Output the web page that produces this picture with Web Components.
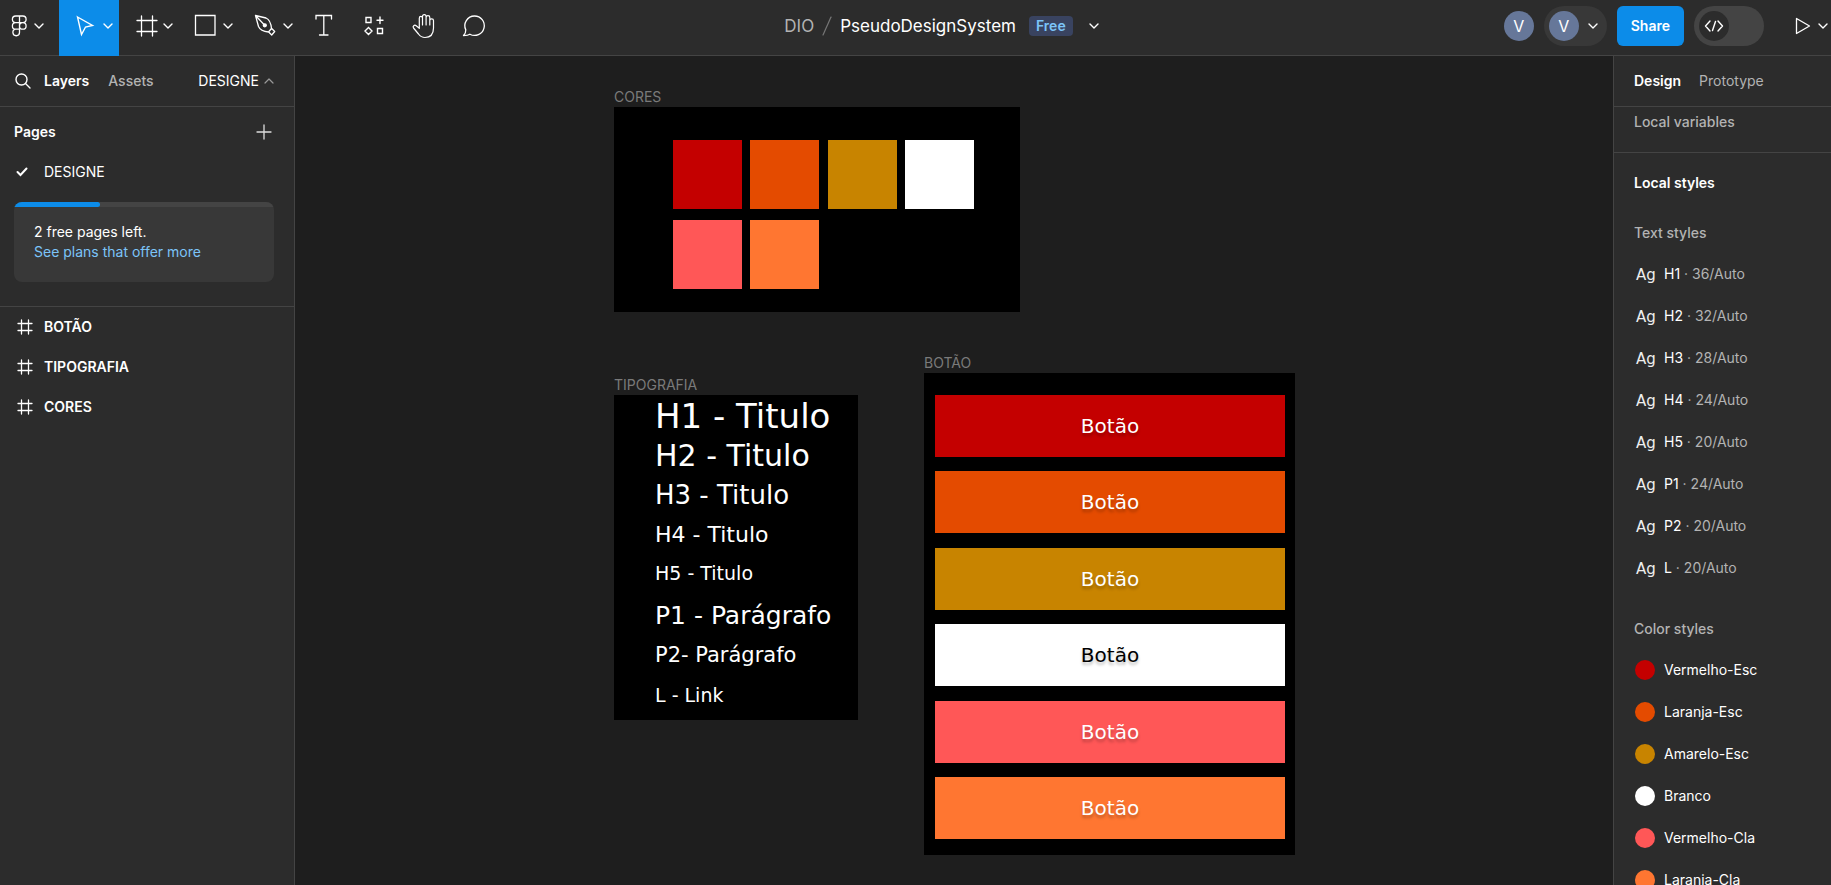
<!DOCTYPE html>
<html lang="pt-BR">
<head>
<meta charset="utf-8">
<meta name="viewport" content="width=device-width, initial-scale=1">
<title>PseudoDesignSystem</title>
<style>
  :root {
    --bg: #2c2c2c; --canvas: #1e1e1e; --line: #444; --text: #fff;
    --muted: #b3b3b3; --blue: #0c8ce9; --link: #7cc4f8; --raised: #383838;
    --brand-font: "DejaVu Sans", Verdana, sans-serif;
  }
  body { margin: 0; background: var(--canvas); color: var(--text); font: 14px/20px Inter, "Liberation Sans", sans-serif; }
</style>
</head>
<body>
<design-app></design-app>

<script>
const define = (name, html, init) => {
  const template = document.createElement('template');
  template.innerHTML = `<style>
    *, :host { box-sizing: border-box; }
    button { font: inherit; color: inherit; background: none; border: 0; padding: 0; margin: 0; text-align: left; }
    a { color: inherit; text-decoration: none; }
    h1, h2, h3, p { margin: 0; padding: 0; font: inherit; }
  </style>` + html;
  customElements.define(name, class extends HTMLElement {
    constructor() {
      super();
      this.attachShadow({ mode: 'open' }).append(template.content.cloneNode(true));
    }
    connectedCallback() { if (init) init(this, this.shadowRoot); }
  });
};

/* name: [width, height, markup] */
const ICONS = {
  chevron: [10, 6, '<path d="M1 1l4 4 4-4" stroke-width="1.4"/>'],
  chevronUp: [10, 6, '<path d="M1 5l4-4 4 4" stroke-width="1.2"/>'],
  logo: [30, 30, '<path d="M15.500 5H11.700a3.200 3.200 0 0 0 0 6.600h3.800zM15.500 5h3.300a3.200 3.200 0 0 1 0 6.600h-3.300zM15.500 11.600H11.700a3.200 3.200 0 0 0 0 6.600h3.800zM18.800 11.600a3.300 3.300 0 1 1-3.300 3.300 3.300 3.300 0 0 1 3.300-3.300zM15.500 18.200H11.700a3.300 3.300 0 1 0 3.800 3.300z" stroke-width="1.3"/>'],
  move: [30, 30, '<path d="M7.500 6l15 8.500-7 1.500-4 7.500z" stroke-width="1.4" stroke-linejoin="miter"/>'],
  frame: [30, 30, '<path d="M11.500 5v20M22.500 5v20M7 9.500h20M7 20.500h20" stroke-width="1.3"/>'],
  rect: [30, 30, '<path d="M5.500 4.500h19.500v19.500h-19.500z" stroke-width="1.3" stroke-linejoin="miter"/>'],
  pen: [30, 30, '<path d="M5.500 4.500l10.500 2.500c3.500 1.500 5 5.500 5.500 10.500l-3 3.500c-5-.5-8.500-2-10-5.500zM5.500 4.500l8.500 9M18.700 21l3 3 3-3.500-3-3"/><circle cx="14.800" cy="14.300" r="1.500" fill="currentColor"/>'],
  text: [30, 30, '<path d="M7 8V4.500h15.500V8M14.800 4.500v19.500M10.500 24h8.500" stroke-width="1.3" stroke-linejoin="miter"/>'],
  components: [30, 30, '<path d="M7 6.500h5v5H7zM18.500 17.500h5v5h-5zM21 6v6.500M18 9.200h6M9.500 16.500l3.500 3.500-3.500 3.500L6 20z" stroke-width="1.4" stroke-linejoin="miter"/>'],
  hand: [30, 30, '<path d="M10.300 14.500V7.200c0-2.400 3.200-2.400 3.200 0V5.500c0-2.600 3.600-2.600 3.600 0v1c0-2.500 3.700-2.500 3.700 0v3c0-2.300 3.700-2.300 3.700 0V17c0 6.500-3.500 9.500-8.500 9.500-3.500 0-5-1.500-6.500-3.500L4.500 17c-1.300-1.700 1-3.700 2.700-2.300l3.100 2.600zM13.500 7v7M17.100 6v8M20.800 8v6" stroke-width="1.2"/>'],
  comment: [30, 30, '<path d="M15.500 5a9.700 9.700 0 1 1-4.600 18.200c-1.500 1-3.400 1.300-6.400 1.300 1.800-1.800 2.400-3.500 2.300-5.600A9.700 9.700 0 0 1 15.500 5z"/>'],
  search: [16, 16, '<circle cx="6.500" cy="6.500" r="5.500" stroke-width="1.4"/><path d="M10.500 10.500l4.500 4.500" stroke-width="1.4"/>'],
  plus: [16, 16, '<path d="M8 1v14M1 8h14" stroke="#ddd"/>'],
  check: [12, 10, '<path d="M1.500 5l3 3 6-6.500" stroke-width="2" stroke-linejoin="miter"/>'],
  hash: [16, 16, '<path d="M4.500 1v14M11.500 1v14M1 4.500h14M1 11.500h14"/>'],
  code: [20, 14, '<path d="M6 2L1.500 7 6 12M14 2l4.500 5-4.500 5M11.500 2.500l-3 9" stroke-width="1.4"/>'],
  play: [16, 18, '<path d="M1.500 1.500L14.500 9l-13 7.500z" stroke-width="1.3"/>'],
  slash: [10, 20, '<path d="M9 1L1 19" stroke-width="1.2"/>'],
};

define('ui-icon', `<style>:host { display: block; flex: none; } svg { display: block; }</style>`, (host, root) => {
  const [w, h, body] = ICONS[host.getAttribute('name')];
  const t = document.createElement('template');
  t.innerHTML = `<svg width="${w}" height="${h}" viewBox="0 0 ${w} ${h}" fill="none" stroke="currentColor" stroke-width="1.3" stroke-linecap="round" stroke-linejoin="round" aria-hidden="true">${body}</svg>`;
  root.append(t.content);
});

define('tool-item', `
  <style>
    :host { display: flex; width: 60px; }
    :host([kind=single]) { width: 50px; }
    :host([kind=menu]) { width: 59px; }
    :host([active]) { background: var(--blue); margin-bottom: -1px; }
    button { flex: 1; display: flex; align-items: center; gap: 3px; padding: 0 0 4px 11px; }
    :host([active]) button { padding-bottom: 5px; }
    :host([kind=single]) button { padding-left: 10px; }
    :host([kind=menu]) button { padding-left: 4px; gap: 0; }
    :host([kind=single]) .more { display: none; }
  </style>
  <button type="button"><slot></slot><ui-icon class="more" name="chevron"></ui-icon></button>`,
  (host, root) => root.querySelector('button').setAttribute('aria-label', host.getAttribute('label')));

define('user-avatar', `
  <style>:host { display: grid; place-items: center; width: 30px; height: 30px; border-radius: 50%; background: #667799; font-size: 16px; }</style>
  <slot></slot>`);

define('app-toolbar', `
  <style>
    :host { display: grid; grid-template-columns: 1fr auto 1fr; height: 56px; background: var(--bg); border-bottom: 1px solid var(--line); }
    nav { display: flex; }
    .file { display: flex; align-items: center; padding: 0 0 4px 52px; font-size: 17px; line-height: 24px; }
    .team { color: var(--muted); }
    .file ui-icon[name=slash] { color: #777; margin: 0 8px; }
    .plan { margin: 0 16px 0 13px; padding: 0 7px; border-radius: 4px; background: #394360; color: var(--link); font-size: 14px; font-weight: 600; line-height: 20px; }
    .actions { display: flex; align-items: center; justify-content: flex-end; gap: 10px; padding: 0 3px 3px 0; }
    .me { display: flex; align-items: center; gap: 9px; height: 40px; padding: 0 9px 0 5px; border-radius: 20px; background: var(--raised); }
    .share { height: 40px; padding: 0 14px; border-radius: 6px; background: var(--blue); font-weight: 600; }
    .dev { position: relative; display: flex; align-items: center; width: 70px; height: 40px; padding: 5px; border-radius: 20px; background: var(--line); }
    .dev input { position: absolute; inset: 0; margin: 0; opacity: 0; }
    .dev span { display: grid; place-items: center; width: 30px; height: 30px; border-radius: 50%; background: var(--bg); }
    .present { display: flex; align-items: center; gap: 7px; margin-left: 21px; }
  </style>
  <nav aria-label="Tools">
    <tool-item kind="menu" label="Main menu"><ui-icon name="logo"></ui-icon></tool-item>
    <tool-item active label="Move"><ui-icon name="move"></ui-icon></tool-item>
    <tool-item label="Frame"><ui-icon name="frame"></ui-icon></tool-item>
    <tool-item label="Rectangle"><ui-icon name="rect"></ui-icon></tool-item>
    <tool-item label="Pen"><ui-icon name="pen"></ui-icon></tool-item>
    <tool-item kind="single" label="Text"><ui-icon name="text"></ui-icon></tool-item>
    <tool-item kind="single" label="Resources"><ui-icon name="components"></ui-icon></tool-item>
    <tool-item kind="single" label="Hand"><ui-icon name="hand"></ui-icon></tool-item>
    <tool-item kind="single" label="Comment"><ui-icon name="comment"></ui-icon></tool-item>
  </nav>
  <div class="file">
    <a class="team" href="#team">DIO</a><ui-icon name="slash"></ui-icon><h1>PseudoDesignSystem</h1>
    <span class="plan">Free</span>
    <button type="button" aria-label="File menu"><ui-icon name="chevron"></ui-icon></button>
  </div>
  <div class="actions">
    <user-avatar>V</user-avatar>
    <button class="me" type="button" aria-label="Account"><user-avatar>V</user-avatar><ui-icon name="chevron"></ui-icon></button>
    <button class="share" type="button">Share</button>
    <label class="dev"><input type="checkbox" role="switch" aria-label="Dev Mode"><span><ui-icon name="code"></ui-icon></span></label>
    <button class="present" type="button" aria-label="Present"><ui-icon name="play"></ui-icon><ui-icon name="chevron"></ui-icon></button>
  </div>`);

define('layer-row', `
  <style>
    :host { display: block; }
    button { display: flex; align-items: center; gap: 11px; width: 100%; height: 40px; padding: 0 17px; font-weight: 600; }
  </style>
  <button type="button"><ui-icon name="hash"></ui-icon><slot></slot></button>`);

define('plan-notice', `
  <style>
    :host { display: block; height: 80px; border-radius: 8px; background: var(--raised); overflow: hidden; }
    .track { height: 5px; background: var(--line); }
    .fill { width: 33%; height: 5px; border-radius: 0 3px 3px 0; background: var(--blue); }
    .copy { padding: 15px 20px; }
    a { color: var(--link); }
  </style>
  <div class="track"><div class="fill"></div></div>
  <div class="copy"><p><slot></slot></p><a href="#plans"><slot name="link"></slot></a></div>`);

define('layers-panel', `
  <style>
    :host { display: block; background: var(--bg); border-right: 1px solid var(--line); }
    header { display: flex; align-items: center; height: 51px; padding: 0 20px 0 15px; border-bottom: 1px solid var(--line); }
    header .tab { margin-left: 19px; color: var(--muted); font-weight: 500; }
    header .tab.on { margin-left: 13px; color: var(--text); font-weight: 600; }
    .current { display: flex; align-items: center; gap: 5px; margin-left: auto; }
    .current ui-icon { color: #999; }
    .pages { padding: 0 20px 24px 14px; border-bottom: 1px solid var(--line); }
    .title { display: flex; align-items: center; justify-content: space-between; height: 50px; padding-right: 2px; }
    h2 { font-weight: 600; }
    .page { display: flex; align-items: center; gap: 16px; width: 100%; height: 30px; margin-bottom: 15px; padding-left: 2px; }
  </style>
  <header>
    <button type="button" aria-label="Search"><ui-icon name="search"></ui-icon></button>
    <button class="tab on" type="button">Layers</button>
    <button class="tab" type="button">Assets</button>
    <button class="current" type="button">DESIGNE<ui-icon name="chevronUp"></ui-icon></button>
  </header>
  <section class="pages">
    <div class="title"><h2>Pages</h2><button type="button" aria-label="Add page"><ui-icon name="plus"></ui-icon></button></div>
    <button class="page" type="button"><ui-icon name="check"></ui-icon>DESIGNE</button>
    <plan-notice>2 free pages left.<span slot="link">See plans that offer more</span></plan-notice>
  </section>
  <layer-row>BOTÃO</layer-row>
  <layer-row>TIPOGRAFIA</layer-row>
  <layer-row>CORES</layer-row>`);

define('text-style', `
  <style>
    :host { display: flex; align-items: center; height: 42px; color: var(--muted); }
    .preview { width: 30px; padding: 2px 0 0 2px; color: #eee; font: 15px/20px var(--brand-font); }
    .name { color: var(--text); white-space: pre; }
  </style>
  <span class="preview">Ag</span><span class="name"><slot name="name"></slot> </span><span>· <slot></slot></span>`);

define('color-style', `
  <style>
    :host { display: flex; align-items: center; gap: 9px; height: 42px; padding-left: 1px; }
    i { flex: none; width: 20px; height: 20px; border-radius: 50%; background: var(--swatch); }
  </style>
  <i></i><slot></slot>`);

define('design-panel', `
  <style>
    :host { display: block; background: var(--bg); border-left: 1px solid var(--line); overflow: hidden; }
    header { display: flex; align-items: center; gap: 18px; height: 51px; padding: 0 20px; border-bottom: 1px solid var(--line); color: var(--muted); }
    header .on { color: var(--text); font-weight: 600; }
    .vars { height: 46px; padding: 5px 20px; border-bottom: 1px solid var(--line); color: var(--muted); font-weight: 500; }
    .styles { padding: 20px 20px 0; }
    h2 { font-weight: 600; margin-bottom: 30px; }
    h3 { color: var(--muted); font-weight: 500; margin-bottom: 10px; }
    .group { margin-bottom: 30px; }
  </style>
  <header><button class="on" type="button">Design</button><button type="button">Prototype</button></header>
  <div class="vars">Local variables</div>
  <section class="styles">
    <h2>Local styles</h2>
    <div class="group">
      <h3>Text styles</h3>
      <text-style><span slot="name">H1</span>36/Auto</text-style>
      <text-style><span slot="name">H2</span>32/Auto</text-style>
      <text-style><span slot="name">H3</span>28/Auto</text-style>
      <text-style><span slot="name">H4</span>24/Auto</text-style>
      <text-style><span slot="name">H5</span>20/Auto</text-style>
      <text-style><span slot="name">P1</span>24/Auto</text-style>
      <text-style><span slot="name">P2</span>20/Auto</text-style>
      <text-style><span slot="name">L</span>20/Auto</text-style>
    </div>
    <div class="group">
      <h3>Color styles</h3>
      <color-style style="--swatch:#c40000">Vermelho-Esc</color-style>
      <color-style style="--swatch:#e44b00">Laranja-Esc</color-style>
      <color-style style="--swatch:#c88400">Amarelo-Esc</color-style>
      <color-style style="--swatch:#fff">Branco</color-style>
      <color-style style="--swatch:#ff5757">Vermelho-Cla</color-style>
      <color-style style="--swatch:#ff7631">Laranja-Cla</color-style>
    </div>
  </section>`);

define('canvas-frame', `
  <style>
    :host { display: flex; flex-direction: column; position: absolute; }
    .label { color: #7a7a7a; line-height: 20px; }
    .board { flex: 1; background: #000; }
  </style>
  <div class="label"><slot name="label"></slot></div><div class="board"><slot></slot></div>`);

define('color-board', `
  <style>
    :host { display: grid; grid-template-columns: repeat(4, 69px); justify-content: space-between; gap: 11px 0; padding: 33px 46px 23px 59px; }
    i { height: 69px; background: var(--c); }
  </style>
  <i style="--c:#c40000"></i><i style="--c:#e44b00"></i><i style="--c:#c88400"></i><i style="--c:#fff"></i>
  <i style="--c:#ff5757"></i><i style="--c:#ff7631"></i>`);

define('type-board', `
  <style>
    :host { display: block; padding-left: 41px; font-family: var(--brand-font); white-space: nowrap; }
    p { height: 38px; line-height: 20px; }
    /* strut that puts every sample on the same baseline in its row */
    p::before { content: ""; display: inline-block; height: 33px; }
    .h1 { font-size: 34px; } .h2 { font-size: 30px; } .h3 { font-size: 26px; } .h4 { font-size: 22px; } .h5 { font-size: 19px; }
    .p1 { font-size: 25px; margin-top: 6px; } .p2 { font-size: 21px; } .link { font-size: 19px; margin-top: 2px; }
  </style>
  <p class="h1">H1 - Titulo</p><p class="h2">H2 - Titulo</p><p class="h3">H3 - Titulo</p><p class="h4">H4 - Titulo</p><p class="h5">H5 - Titulo</p>
  <p class="p1">P1 - Parágrafo</p><p class="p2">P2- Parágrafo</p><p class="link">L - Link</p>`);

define('brand-button', `
  <style>
    :host { display: block; }
    button { display: block; width: 100%; height: 62px; background: var(--fill); color: var(--ink, #fff); font: 20px/24px var(--brand-font); text-align: center; text-shadow: 0 3px 3px rgba(0,0,0,.25); }
  </style>
  <button type="button"><slot></slot></button>`);

define('button-board', `
  <style>:host { display: flex; flex-direction: column; justify-content: space-between; height: 100%; padding: 22px 10px 16px 11px; }</style>
  <brand-button style="--fill:#c40000">Botão</brand-button>
  <brand-button style="--fill:#e44b00">Botão</brand-button>
  <brand-button style="--fill:#c88400">Botão</brand-button>
  <brand-button style="--fill:#fff;--ink:#000">Botão</brand-button>
  <brand-button style="--fill:#ff5757">Botão</brand-button>
  <brand-button style="--fill:#ff7631">Botão</brand-button>`);

define('design-canvas', `
  <style>
    :host { display: block; position: relative; overflow: hidden; background: var(--canvas); }
    .cores { left: 319px; top: 31px; width: 406px; height: 225px; }
    .tipografia { left: 319px; top: 319px; width: 244px; height: 345px; }
    .botao { left: 629px; top: 297px; width: 371px; height: 502px; }
  </style>
  <canvas-frame class="cores"><span slot="label">CORES</span><color-board></color-board></canvas-frame>
  <canvas-frame class="tipografia"><span slot="label">TIPOGRAFIA</span><type-board></type-board></canvas-frame>
  <canvas-frame class="botao"><span slot="label">BOTÃO</span><button-board></button-board></canvas-frame>`);

define('design-app', `
  <style>
    :host { display: grid; grid-template: auto minmax(0, 1fr) / 295px minmax(0, 1fr) 218px; height: 100vh; overflow: hidden; }
    app-toolbar { grid-column: 1 / -1; }
  </style>
  <app-toolbar></app-toolbar>
  <layers-panel></layers-panel>
  <design-canvas></design-canvas>
  <design-panel></design-panel>`);
</script>
</body>
</html>
